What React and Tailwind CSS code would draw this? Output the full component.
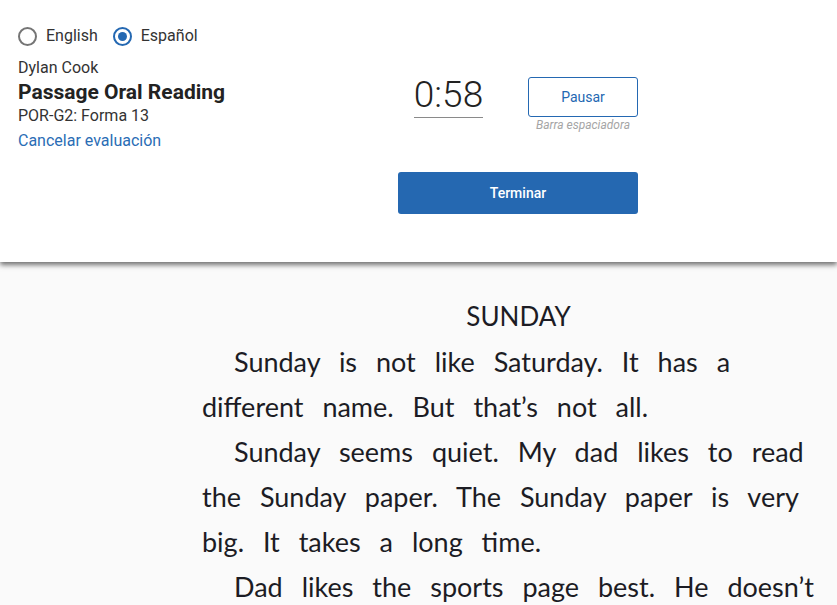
import React, { useState } from 'react';

const passage = [
    { indent: true, text: 'Sunday is not like Saturday. It has a' },
    { indent: false, text: 'different name. But that\u2019s not all.' },
    { indent: true, text: 'Sunday seems quiet. My dad likes to read' },
    { indent: false, text: 'the Sunday paper. The Sunday paper is very' },
    { indent: false, text: 'big. It takes a long time.' },
    { indent: true, text: 'Dad likes the sports page best. He doesn\u2019t' },
];

const Radio = ({ checked, label, onClick }) => (
    <label className="flex items-center gap-[9px] cursor-pointer" onClick={onClick}>
        <span
            className={`w-[19px] h-[19px] rounded-full border-2 flex items-center justify-center ${
                checked ? 'border-[#2468b2]' : 'border-[#757575]'
            }`}
        >
            {checked && <span className="w-[9px] h-[9px] rounded-full bg-[#2468b2]" />}
        </span>
        <span className="text-[16px] text-[#333]">{label}</span>
    </label>
);

const App = () => {
    const [lang, setLang] = useState('es');

    return (
        <div className="min-h-[605px] bg-[#fafafa] font-['Roboto',sans-serif]">
            <div className="h-[262px] bg-white flex shadow-[0_3px_5px_rgba(0,0,0,0.55)] relative z-10">
                <div className="w-[398px] pl-[18px] pt-[24px]">
                    <div className="flex items-center gap-[15px]">
                        <Radio checked={lang === 'en'} label="English" onClick={() => setLang('en')} />
                        <Radio checked={lang === 'es'} label="Español" onClick={() => setLang('es')} />
                    </div>
                    <div className="mt-[10px] text-[16px] leading-[20px] text-[#333]">Dylan Cook</div>
                    <div className="mt-[1px] text-[21px] leading-[26px] font-bold text-[#222]">Passage Oral Reading</div>
                    <div className="mt-[1px] text-[16px] leading-[20px] text-[#333]">POR-G2: Forma 13</div>
                    <a className="block mt-[5px] text-[16px] leading-[20px] text-[#2a6db5] cursor-pointer">
                        Cancelar evaluación
                    </a>
                </div>
                <div className="w-[240px] pt-[77px]">
                    <div className="flex items-start">
                        <div className="ml-[16px] w-[69px] flex flex-col items-center">
                            <div className="text-[37px] leading-[38px] font-light text-[#222] -mt-[1px]">0:58</div>
                            <div className="w-[69px] h-px bg-[#8a8a8a] mt-[3px]" />
                        </div>
                        <div className="ml-auto w-[110px] flex flex-col items-center">
                            <button className="w-[110px] h-[40px] rounded-[3px] border border-[#2468b2] bg-white text-[14px] text-[#2468b2]">
                                Pausar
                            </button>
                            <div className="mt-[1px] text-[12px] leading-[14px] italic text-[#a5a5a5]">Barra espaciadora</div>
                        </div>
                    </div>
                    <button className="mt-[40px] w-[240px] h-[42px] rounded-[3px] bg-[#2568b1] text-white text-[14px] font-medium">
                        Terminar
                    </button>
                </div>
            </div>

            <div className="pl-[202px] pr-[2px] pt-[32px] font-['Lato',sans-serif] text-[#1c1c24] text-[27px] [word-spacing:12px]">
                <div className="h-[45px] leading-[45px] text-center text-[26px] [word-spacing:0]">SUNDAY</div>
                {passage.map((line, i) => (
                    <div
                        key={i}
                        className={`h-[45px] leading-[45px] whitespace-nowrap ${line.indent ? 'pl-[32px]' : ''}`}
                    >
                        {line.text}
                    </div>
                ))}
            </div>
        </div>
    );
};

export default App;
